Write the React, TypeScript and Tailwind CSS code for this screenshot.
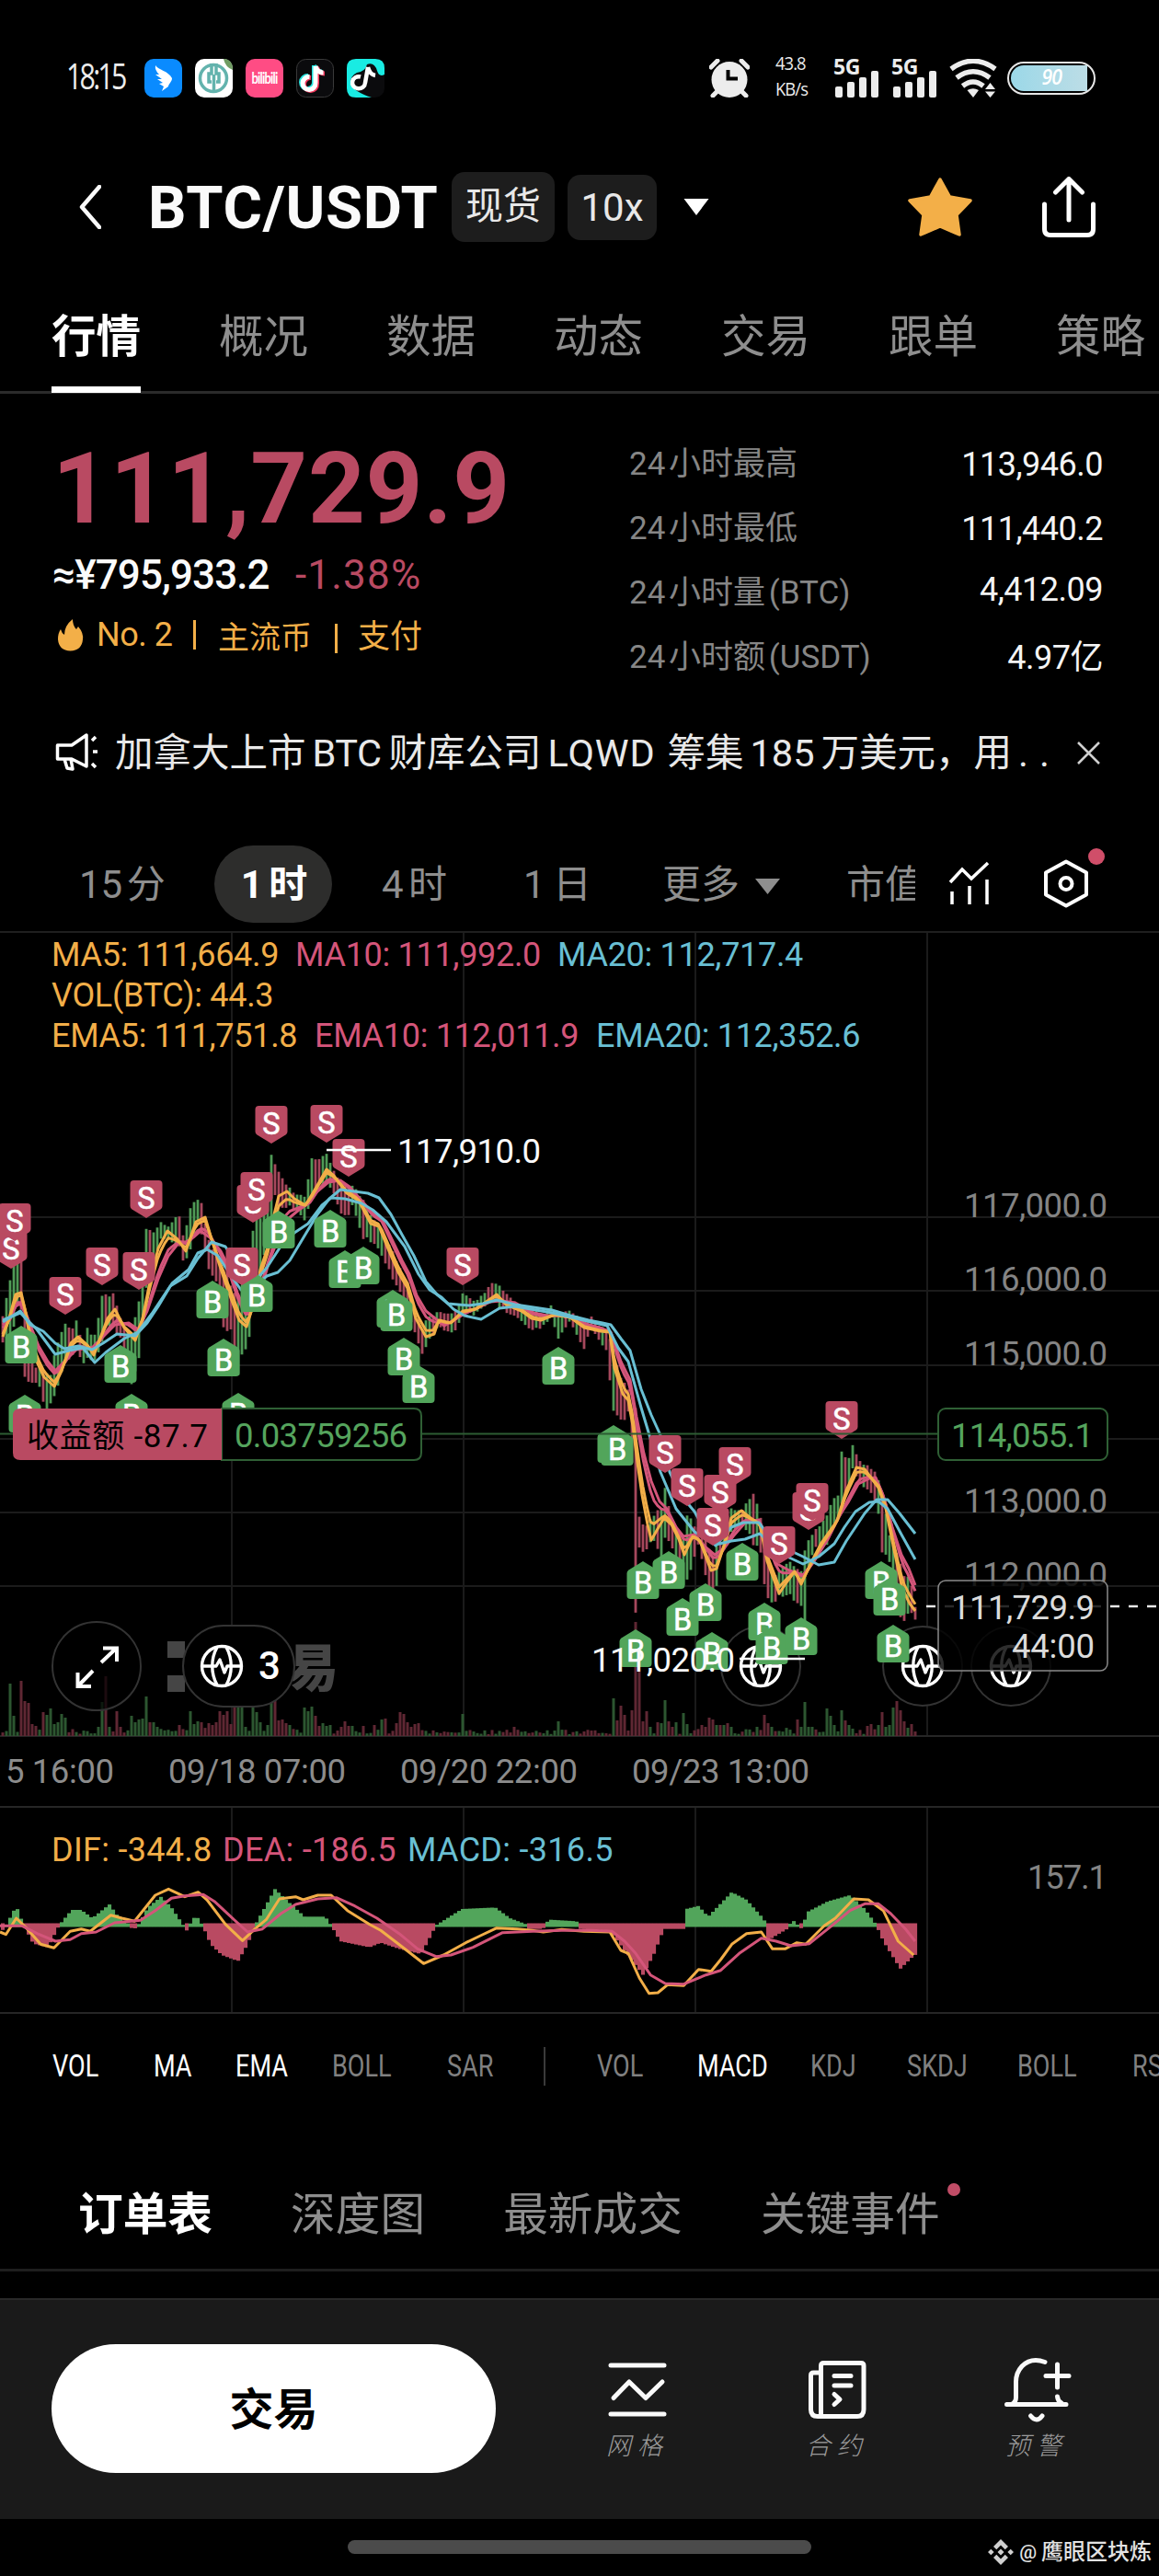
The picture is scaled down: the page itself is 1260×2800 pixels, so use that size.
/** @format */

import type { ReactNode } from "react";

/* ============================== */
/* TYPES                          */
/* ============================== */

type Pt = [number, number];
type Range = [number, number, number];

/* ============================== */
/* PAGE DATA                      */
/* ============================== */

const navTabs = ["行情", "概况", "数据", "动态", "交易", "跟单", "策略"];

const stats = [
  { label: "24 小时最高", value: "113,946.0", lift: "" },
  { label: "24 小时最低", value: "111,440.2", lift: "" },
  { label: "24 小时量 (BTC)", value: "4,412.09", lift: "pb-[8px]" },
  { label: "24 小时额 (USDT)", value: "4.97亿", lift: "" },
];

const indicators = [
  { name: "VOL", on: true, w: "w-[110px]" },
  { name: "MA", on: true, w: "w-[89px]" },
  { name: "EMA", on: true, w: "w-[105px]" },
  { name: "BOLL", on: false, w: "w-[125px]" },
  { name: "SAR", on: false, w: "w-[105px]" },
];

const subIndicators = [
  { name: "VOL", on: false, w: "w-[109px]" },
  { name: "MACD", on: true, w: "w-[123px]" },
  { name: "KDJ", on: false, w: "w-[105px]" },
  { name: "SKDJ", on: false, w: "w-[120px]" },
  { name: "BOLL", on: false, w: "w-[125px]" },
  { name: "RSI", on: false, w: "w-[80px]" },
];

/* ============================== */
/* CHART DATA                     */
/* ============================== */

// x, high, low
const candleRange: Range[] = [
  [0, 1443, 1467], [10, 1390, 1453], [15, 1373, 1443], [22, 1355, 1413], [27, 1420, 1507], [32, 1430, 1513],
  [37, 1487, 1503], [43, 1483, 1510], [48, 1487, 1533], [55, 1490, 1530], [60, 1460, 1515], [71, 1437, 1487],
  [79, 1442, 1473], [83, 1435, 1460], [90, 1460, 1487], [95, 1442, 1480], [103, 1450, 1482], [111, 1406, 1460],
  [115, 1402, 1447], [123, 1405, 1443], [133, 1437, 1460], [143, 1447, 1507], [151, 1410, 1482], [159, 1333, 1400],
  [167, 1337, 1373], [175, 1328, 1347], [183, 1333, 1350], [195, 1317, 1360], [200, 1343, 1377], [207, 1307, 1360],
  [215, 1302, 1327], [219, 1307, 1347], [227, 1347, 1382], [237, 1363, 1400], [243, 1377, 1447], [251, 1393, 1450],
  [259, 1407, 1505], [263, 1413, 1477], [271, 1387, 1457], [275, 1337, 1427], [279, 1320, 1393], [283, 1320, 1390],
  [295, 1252, 1337], [299, 1262, 1303], [303, 1272, 1317], [315, 1290, 1313], [323, 1297, 1320], [331, 1300, 1327],
  [339, 1255, 1303], [347, 1258, 1287], [355, 1250, 1290], [363, 1270, 1300], [371, 1283, 1320], [379, 1290, 1323],
  [383, 1285, 1313], [395, 1303, 1347], [403, 1320, 1352], [415, 1333, 1365], [427, 1360, 1393], [435, 1377, 1407],
  [443, 1393, 1430], [452, 1427, 1453], [459, 1440, 1475], [467, 1430, 1457], [477, 1423, 1443], [487, 1427, 1450],
  [497, 1423, 1447], [503, 1405, 1427], [515, 1413, 1430], [525, 1407, 1423], [535, 1392, 1413], [543, 1397, 1423],
  [555, 1410, 1430], [567, 1423, 1437], [579, 1423, 1448], [590, 1427, 1443], [599, 1418, 1433], [607, 1427, 1456],
  [620, 1423, 1437], [635, 1437, 1467], [643, 1430, 1443], [651, 1440, 1458], [659, 1443, 1470], [667, 1457, 1540],
  [675, 1493, 1550], [683, 1510, 1537], [687, 1527, 1597], [691, 1530, 1763], [695, 1643, 1687], [700, 1660, 1687],
  [711, 1643, 1677], [719, 1635, 1697], [723, 1608, 1677], [730, 1653, 1680], [743, 1667, 1728], [747, 1643, 1727],
  [759, 1660, 1680], [767, 1670, 1713], [775, 1680, 1765], [783, 1667, 1693], [795, 1637, 1667], [806, 1640, 1657],
  [819, 1622, 1680], [826, 1643, 1683], [832, 1667, 1733], [840, 1707, 1747], [847, 1707, 1737], [859, 1693, 1738],
  [871, 1707, 1748], [875, 1683, 1800], [879, 1670, 1707], [885, 1663, 1683], [899, 1647, 1680], [904, 1628, 1660],
  [911, 1625, 1653], [915, 1572, 1640], [922, 1583, 1620], [927, 1568, 1597], [934, 1587, 1613], [947, 1593, 1623],
  [955, 1603, 1647], [959, 1623, 1688], [967, 1667, 1700], [975, 1680, 1757], [983, 1713, 1768], [989, 1707, 1757],
  [995, 1745, 1762],
];

const ma5: Pt[] = [
  [3, 1453], [10, 1433], [17, 1407], [23, 1405], [28, 1427], [33, 1457], [40, 1480], [48, 1497], [59, 1507],
  [67, 1490], [77, 1460], [85, 1453], [95, 1462], [102, 1473], [108, 1457], [117, 1433], [125, 1423], [135, 1443],
  [147, 1457], [155, 1433], [163, 1393], [172, 1357], [182, 1338], [193, 1347], [202, 1360], [213, 1328],
  [223, 1323], [230, 1347], [238, 1373], [248, 1403], [260, 1435], [268, 1442], [277, 1413], [283, 1380],
  [293, 1350], [298, 1320], [303, 1300], [312, 1295], [320, 1303], [332, 1310], [340, 1297], [355, 1271],
  [363, 1278], [377, 1297], [390, 1305], [403, 1330], [412, 1333], [423, 1360], [433, 1383], [443, 1400],
  [452, 1433], [463, 1453], [472, 1450], [477, 1435], [490, 1438], [503, 1425], [517, 1423], [540, 1407],
  [550, 1418], [567, 1425], [578, 1433], [588, 1435], [603, 1429], [620, 1432], [635, 1443], [653, 1447],
  [663, 1448], [668, 1487], [677, 1515], [683, 1522], [688, 1550], [693, 1590], [698, 1625], [704, 1657],
  [708, 1674], [716, 1660], [722, 1650], [730, 1657], [738, 1673], [744, 1690], [753, 1670], [761, 1675],
  [773, 1707], [779, 1705], [787, 1680], [795, 1650], [806, 1642], [816, 1650], [826, 1657], [834, 1697],
  [847, 1732], [855, 1720], [864, 1708], [871, 1722], [881, 1700], [893, 1677], [910, 1653], [920, 1620],
  [931, 1595], [940, 1597], [955, 1617], [963, 1640], [971, 1680], [981, 1727], [989, 1743], [995, 1751],
];

const ma10: Pt[] = [
  [3, 1440], [10, 1435], [17, 1420], [22, 1417], [30, 1433], [42, 1463], [52, 1480], [60, 1490], [70, 1480],
  [83, 1467], [100, 1465], [115, 1450], [125, 1440], [140, 1438], [150, 1445], [160, 1425], [172, 1390],
  [183, 1365], [195, 1350], [202, 1350], [210, 1345], [218, 1338], [228, 1345], [240, 1360], [250, 1380],
  [258, 1405], [268, 1427], [277, 1420], [285, 1397], [293, 1370], [305, 1340], [313, 1325], [325, 1315],
  [337, 1307], [345, 1295], [357, 1285], [370, 1283], [380, 1290], [393, 1305], [405, 1318], [415, 1325],
  [425, 1345], [437, 1370], [445, 1385], [453, 1408], [463, 1425], [473, 1433], [483, 1441], [493, 1435],
  [505, 1428], [518, 1422], [533, 1415], [545, 1414], [560, 1416], [580, 1427], [595, 1430], [610, 1430],
  [625, 1433], [640, 1440], [655, 1444], [664, 1448], [675, 1480], [685, 1500], [692, 1540], [700, 1580],
  [708, 1610], [717, 1632], [725, 1640], [735, 1660], [743, 1670], [755, 1668], [765, 1680], [777, 1690],
  [787, 1683], [797, 1670], [810, 1655], [825, 1652], [835, 1675], [845, 1700], [858, 1707], [873, 1712],
  [885, 1697], [900, 1673], [911, 1650], [922, 1633], [933, 1613], [945, 1607], [952, 1606], [960, 1625],
  [970, 1660], [980, 1690], [988, 1705], [995, 1723],
];

const ma20: Pt[] = [
  [3, 1437], [22, 1425], [33, 1440], [47, 1447], [60, 1460], [70, 1466], [85, 1463], [100, 1467], [112, 1460],
  [127, 1450], [147, 1452], [160, 1438], [172, 1420], [187, 1395], [205, 1380], [215, 1362], [225, 1358],
  [237, 1365], [250, 1385], [262, 1402], [275, 1400], [290, 1387], [302, 1383], [315, 1370], [330, 1345],
  [345, 1320], [358, 1303], [370, 1293], [385, 1295], [400, 1297], [412, 1302], [425, 1320], [437, 1342],
  [450, 1365], [463, 1393], [475, 1407], [487, 1417], [498, 1418], [510, 1419], [525, 1417], [540, 1413],
  [560, 1418], [580, 1421], [600, 1424], [620, 1430], [640, 1435], [655, 1438], [664, 1440], [675, 1455],
  [685, 1468], [697, 1510], [708, 1538], [718, 1560], [728, 1600], [740, 1625], [755, 1643], [770, 1670],
  [778, 1680], [795, 1660], [808, 1655], [825, 1655], [840, 1675], [858, 1685], [873, 1692], [890, 1701],
  [907, 1698], [920, 1675], [940, 1645], [953, 1630], [965, 1630], [978, 1645], [995, 1667],
];

const ema20: Pt[] = [
  [3, 1435], [22, 1427], [40, 1445], [60, 1472], [75, 1468], [90, 1465], [103, 1481], [115, 1470], [135, 1455],
  [150, 1448], [165, 1428], [185, 1398], [203, 1387], [215, 1368], [230, 1350], [245, 1355], [258, 1375],
  [275, 1395], [290, 1378], [305, 1355], [320, 1340], [335, 1330], [350, 1310], [360, 1302], [375, 1303],
  [393, 1308], [405, 1315], [420, 1328], [440, 1355], [455, 1385], [467, 1402], [480, 1410], [493, 1423],
  [505, 1430], [523, 1434], [543, 1422], [560, 1420], [600, 1427], [660, 1441], [672, 1465], [683, 1480],
  [697, 1530], [706, 1560], [718, 1600], [735, 1640], [755, 1665], [778, 1679], [795, 1675], [810, 1673],
  [826, 1667], [840, 1680], [858, 1693], [873, 1700], [890, 1692], [907, 1678], [918, 1660], [930, 1643],
  [945, 1633], [955, 1632], [965, 1640], [980, 1668], [995, 1695],
];

const volumeSpikes: Record<number, number> = {
  11: 57, 15: 22, 23: 60, 27: 38, 31: 36, 35: 13, 39: 11, 47: 26, 51: 23, 55: 30, 59: 13, 63: 15, 67: 24, 71: 20,
  107: 10, 111: 37, 115: 65, 119: 10, 127: 27, 131: 10, 143: 22, 147: 15, 151: 18, 155: 19, 159: 43, 163: 15,
  167: 15, 171: 10, 195: 12, 207: 27, 211: 13, 215: 16, 219: 15, 227: 14, 231: 12, 235: 15, 239: 27, 243: 23,
  247: 27, 251: 13, 255: 33, 259: 33, 263: 32, 267: 10, 275: 32, 279: 26, 283: 15, 291: 12, 295: 38, 299: 39,
  303: 17, 307: 18, 311: 14, 315: 12, 331: 31, 335: 27, 339: 32, 343: 22, 347: 11, 351: 14, 355: 11, 359: 12,
  371: 10, 375: 16, 379: 11, 383: 11, 395: 11, 407: 12, 415: 18, 419: 19, 431: 14, 435: 26, 439: 24, 443: 15,
  447: 10, 451: 13, 455: 14, 503: 24, 559: 10, 607: 16, 667: 41, 671: 17, 675: 33, 679: 23, 683: 6, 687: 28,
  691: 124, 695: 70, 699: 16, 703: 27, 707: 10, 715: 15, 719: 14, 723: 39, 727: 16, 731: 10, 735: 15, 743: 25,
  747: 13, 763: 12, 767: 10, 771: 20, 775: 18, 779: 12, 783: 12, 787: 12, 791: 14, 795: 10, 823: 10, 831: 23,
  835: 14, 839: 10, 867: 18, 871: 10, 875: 37, 879: 10, 883: 10, 899: 30, 903: 22, 907: 12, 915: 28, 919: 17,
  923: 12, 943: 11, 947: 13, 955: 12, 959: 26, 963: 10, 967: 12, 971: 31, 975: 38, 979: 28, 983: 16, 987: 9,
  991: 13, 995: 5,
};

const buys: Pt[] = [
  [27, 1516], [23, 1441], [131, 1462], [143, 1515], [231, 1392], [243, 1455], [259, 1514], [279, 1385],
  [303, 1316], [359, 1315], [375, 1359], [395, 1355], [427, 1402], [431, 1406], [439, 1454], [455, 1484],
  [607, 1464], [667, 1549], [671, 1552], [691, 1771], [699, 1697], [727, 1686], [742, 1737], [767, 1721],
  [774, 1774], [807, 1677], [831, 1742], [839, 1768], [871, 1758], [958, 1697], [967, 1715], [971, 1766],
];

const sells: Pt[] = [
  [12, 1338], [16, 1308], [71, 1388], [111, 1356], [159, 1283], [151, 1361], [263, 1356], [275, 1288],
  [279, 1274], [295, 1202], [355, 1201], [379, 1238], [503, 1356], [723, 1560], [747, 1596], [799, 1573],
  [783, 1603], [775, 1639], [847, 1659], [879, 1622], [883, 1612], [915, 1523],
];

// MACD series, kept in the panel's own units
const histogram: Pt[] = [
  [0, 455], [8, 430], [22, 365], [32, 428], [45, 488], [65, 500], [80, 428], [97, 378], [110, 378], [125, 405],
  [148, 360], [160, 400], [175, 425], [180, 445], [187, 428], [200, 370], [218, 335], [232, 370], [248, 428],
  [252, 448], [256, 428], [265, 395], [274, 428], [285, 490], [300, 525], [322, 545], [335, 490], [345, 428],
  [372, 310], [385, 340], [412, 400], [440, 400], [448, 428], [460, 480], [500, 500], [515, 485], [540, 505],
  [570, 522], [590, 428], [625, 375], [670, 370], [690, 405], [712, 425], [715, 440], [735, 440], [738, 420],
  [745, 410], [780, 415], [785, 440], [825, 445], [845, 510], [870, 590], [885, 520], [898, 440], [925, 440],
  [928, 375], [945, 365], [958, 400], [990, 320], [1010, 345], [1034, 410], [1037, 480], [1065, 440],
  [1072, 410], [1085, 440], [1092, 385], [1120, 350], [1150, 330], [1170, 375], [1185, 425], [1195, 480],
  [1218, 570], [1235, 530], [1241, 520],
];

const dif: Pt[] = [
  [0, 450], [8, 458], [22, 405], [35, 435], [55, 490], [73, 502], [95, 448], [110, 440], [122, 448], [150, 395],
  [165, 405], [182, 415], [210, 330], [228, 310], [250, 335], [268, 320], [280, 345], [305, 425], [328, 478],
  [345, 440], [360, 410], [378, 342], [400, 335], [410, 345], [430, 330], [448, 330], [470, 380], [500, 425],
  [515, 445], [545, 500], [573, 553], [600, 525], [630, 485], [650, 462], [672, 437], [700, 440], [720, 445],
  [735, 450], [760, 442], [790, 448], [825, 450], [840, 510], [850, 520], [865, 600], [878, 650], [890, 648],
  [903, 622], [925, 625], [945, 572], [962, 578], [975, 540], [990, 490], [1010, 455], [1030, 450], [1045, 505],
  [1062, 505], [1078, 485], [1090, 490], [1115, 430], [1130, 405], [1155, 342], [1175, 345], [1195, 380],
  [1215, 480], [1236, 525],
];

const dea: Pt[] = [
  [0, 430], [30, 430], [50, 455], [75, 480], [95, 475], [110, 455], [130, 450], [155, 420], [190, 412],
  [210, 380], [232, 340], [250, 332], [275, 328], [290, 350], [310, 395], [335, 450], [355, 440], [380, 390],
  [400, 360], [430, 342], [455, 338], [480, 365], [510, 405], [540, 455], [565, 505], [590, 530], [610, 525],
  [640, 500], [680, 452], [720, 448], [760, 445], [800, 445], [828, 448], [845, 480], [860, 520], [880, 590],
  [900, 618], [925, 620], [955, 590], [975, 575], [1000, 520], [1030, 470], [1050, 480], [1070, 495],
  [1095, 488], [1125, 430], [1150, 380], [1170, 358], [1188, 358], [1205, 390], [1225, 440], [1238, 480],
];

/* ============================== */
/* CHART HELPERS                  */
/* ============================== */

const UP = "#52a55b";
const DOWN = "#b94a62";
const ORANGE = "#f2ae48";
const PINK = "#d4557a";
const BLUE = "#69bfd3";

const noise = (n: number) => {
  const v = Math.sin(n * 127.1 + 11.7) * 43758.5453;
  return v - Math.floor(v);
};

const at = (pts: number[][], x: number, k = 1) => {
  let i = 1;
  while (i < pts.length - 1 && pts[i][0] < x) i++;
  const a = pts[i - 1];
  const b = pts[i];
  const t = Math.min(1, Math.max(0, (x - a[0]) / (b[0] - a[0])));
  return a[k] + (b[k] - a[k]) * t;
};

const line = (pts: Pt[]) => "M" + pts.map((p) => `${p[0].toFixed(1)} ${p[1].toFixed(1)}`).join("L");

const xs = Array.from({ length: 249 }, (_, i) => 3 + i * 4);

const candles = xs.map((x, i) => {
  const top = at(candleRange, x, 1);
  const bottom = at(candleRange, x, 2);
  const h = bottom - top;
  const y1 = top + h * noise(i) * 0.14;
  const y2 = bottom - h * noise(i + 500) * 0.14;
  const slope = at(candleRange, x + 4, 1) - at(candleRange, x - 4, 1);
  const up = noise(i + 900) > 0.5 + Math.max(-0.35, Math.min(0.35, slope / 40));
  return { x, y1, y2, up };
});

const blend = (a: Pt[], b: Pt[], k: number): Pt[] => xs.map((x) => [x, at(a, x) * (1 - k) + at(b, x - 2) * k]);

const ema5 = blend(ma5, ma10, 0.22);
const ema10 = blend(ma10, ma5, 0.25);

const mx = (x: number) => x * 0.8036;
const my = (y: number) => 1950 + y / 3;
const macdLine = (pts: Pt[]) => line(pts.map(([x, y]): Pt => [mx(x), my(y)]));

/* ============================== */
/* ICONS                          */
/* ============================== */

function Marker({ x, y, side }: { x: number; y: number; side: "B" | "S" }) {
  const buy = side === "B";
  return (
    <g transform={`translate(${x - 17.5} ${y})`}>
      <path
        d={
          buy
            ? "M17.5 0L33 9.500Q35 11 35 13V37Q35 41 31 41H4Q0 41 0 37V13Q0 11 2 9.500Z"
            : "M17.500 41L33 31.500Q35 30 35 28V4Q35 0 31 0H4Q0 0 0 4V28Q0 30 2 31.500Z"
        }
        fill={buy ? UP : DOWN}
      />
      <text
        x="17.5"
        y={buy ? 34.5 : 30.5}
        fontSize="32.5"
        fontWeight="400"
        textAnchor="middle"
        fill="#fff"
        stroke="#fff"
        strokeWidth="0.6"
      >
        {side}
      </text>
    </g>
  );
}

function Globe({ x, y }: { x: number; y: number }) {
  return (
    <g transform={`translate(${x} ${y})`} fill="none" stroke="#fff" strokeWidth="3.4" strokeLinejoin="round">
      <circle r="21.500" />
      <path d="M-5 -20.500C-12 -8 -12 8 -5 20.500M5 -20.500C12 -8 12 8 5 20.500M-21.500 0H-6L-2 -7L3 7L6 0H21.500" />
    </g>
  );
}

function Signal() {
  return (
    <div className="relative h-[42px] w-[50px]">
      <span className="absolute -top-[3px] left-0 font-['Open_Sans'] text-[23px] leading-[22px] font-bold tracking-[-0.5px]">
        5G
      </span>
      <svg className="absolute inset-0" width="50" height="42" fill="#ececec">
        <rect x="2" y="30" width="8" height="12" rx="2" />
        <rect x="15" y="25" width="8" height="17" rx="2" />
        <rect x="28" y="20" width="8" height="22" rx="2" />
        <rect x="41" y="13" width="8" height="29" rx="2" />
      </svg>
    </div>
  );
}

const NOTE = "M21 8V26A7 7 0 1 1 14.500 19.500M21 8Q23 15 29.500 15";

/* ============================== */
/* SECTIONS                       */
/* ============================== */

function StatusBar() {
  return (
    <header className="flex h-[170px] items-center pl-[72px] pr-[69px] text-[#ececec]">
      <span className="w-[85px] pb-[6px] font-['Open_Sans'] text-[38px] leading-none tracking-[-3.5px]">
        <span className="inline-block origin-left scale-x-[0.8]">18:15</span>
      </span>

      <div className="flex gap-[14px]">
        <svg width="41" height="42" viewBox="0 0 41 42">
          <rect width="41" height="42" rx="10" fill="#0a8bff" />
          <path
            d="M12 7C15 12 26 13 30 21C30 25 26 27 26 30L19 35L21 30L16 27L20 26L14 22L19 22L12 17L16 17Q11 12 12 7Z"
            fill="#fff"
          />
        </svg>
        <svg width="41" height="42" viewBox="0 0 41 42">
          <rect width="41" height="42" rx="10" fill="#fff" />
          <path d="M31 0Q41 0 41 12Q33 9 31 0Z" fill="#6f9c62" />
          <circle cx="20" cy="21" r="14.500" fill="none" stroke="#63b3ad" strokeWidth="3.500" />
          <path d="M18 5V16H15V25H18M23 5V16H26V25H23M20.500 17V36" fill="none" stroke="#63b3ad" strokeWidth="3.500" />
        </svg>
        <div className="flex h-[42px] w-[41px] items-center justify-center rounded-[10px] bg-[#ff4c84]">
          <span className="scale-y-[1.25] font-['Lato'] text-[13px] leading-none font-bold tracking-[-0.8px] text-white">
            bilibili
          </span>
        </div>
        <svg width="41" height="42" viewBox="0 0 41 42" fill="none" strokeWidth="5">
          <rect x="0.500" y="0.500" width="40" height="41" rx="10" fill="#0b0b0d" stroke="#3a3a3a" strokeWidth="1" />
          <path d={NOTE} stroke="#25e5e0" transform="translate(-1.500 -1)" />
          <path d={NOTE} stroke="#f2375b" transform="translate(1.500 1)" />
          <path d={NOTE} stroke="#fff" />
        </svg>
        <svg width="41" height="42" viewBox="0 0 41 42" fill="none">
          <rect width="41" height="42" rx="10" fill="#0b0b0d" />
          <path d="M10 0H31Q41 0 41 10V17Q35 20 33 13Q30 3 22 6Q20 14 11 15Q4 18 4 27Q8 36 27 42H10Q0 42 0 32V10Q0 0 10 0Z" fill="#19ece3" />
          <path d="M23 9L20 26A7 6.500 0 1 1 15 19.500M23 9Q25 17 31 18" stroke="#fff" strokeWidth="4.500" />
        </svg>
      </div>

      <div className="ml-auto flex items-center">
        <svg width="44" height="42" viewBox="0 0 44 42" fill="none" stroke="#ececec">
          <circle cx="22" cy="22.500" r="19.500" fill="#ececec" stroke="none" />
          <path d="M2 9L9 2M42 9L35 2" strokeWidth="5" strokeLinecap="round" />
          <path d="M8 36L4 40M36 36L40 40" strokeWidth="5" strokeLinecap="round" />
          <path d="M20.500 12V21.500H31" stroke="#000" strokeWidth="4" />
        </svg>
        <div className="ml-[28px] flex w-[63px] flex-col gap-[6px] pb-[4px] font-['Open_Sans'] text-[20px] leading-[22px] tracking-[-1px]">
          <span className="origin-left scale-x-[0.92]">43.8</span>
          <span className="origin-left scale-x-[0.92]">KB/s</span>
        </div>
        <Signal />
        <div className="w-[13px]" />
        <Signal />
        <svg className="ml-[13px]" width="52" height="42" viewBox="0 0 52 42" fill="none" stroke="#ececec" strokeWidth="5.500">
          <path d="M2 11Q26 -6.500 50 11M8 20.500Q26 7 44 20.500M14.500 29.500Q26 20.500 37 29.500" />
          <path d="M19.500 34Q26 30.500 32 34L26 42ZM39 33H50L44.500 26ZM39 35.500H50L44.500 42Z" fill="#ececec" stroke="none" />
        </svg>
        <div className="ml-[11px] flex h-[36px] w-[96px] rounded-full border-[2px] border-[#e6e6e6] p-[2px]">
          <div className="flex w-[83px] items-center justify-center rounded-l-full rounded-r-[6px] bg-linear-to-r from-[#9bd8e8] to-[#bcdde6] pb-[5px] pl-[6px] font-['Open_Sans'] text-[24px] leading-none font-semibold tracking-[-1px] text-white italic">
            <span className="scale-x-[0.88]">90</span>
          </div>
        </div>
      </div>
    </header>
  );
}

function TitleBar() {
  return (
    <div className="flex h-[110px] items-center pl-[86px] pr-[69px]">
      <svg className="w-[24px]" height="48" viewBox="0 0 24 48" fill="none" stroke="#fafafa" strokeWidth="4.500">
        <path d="M22 2L3 24L22 46" strokeLinecap="round" strokeLinejoin="round" />
      </svg>
      <h1 className="ml-[51px] w-[330px] pt-[3px] text-[65px] leading-none font-bold tracking-[0.7px] whitespace-nowrap text-[#fafafa]">
        BTC/USDT
      </h1>
      <span className="flex h-[76px] w-[112px] items-center justify-center rounded-[14px] bg-[#1d1d1d] text-[41px] text-[#e8e8e8]">
        现货
      </span>
      <span className="ml-[14px] flex h-[71px] w-[97px] items-center justify-center rounded-[14px] bg-[#1d1d1d] text-[42px] text-[#e8e8e8]">
        10x
      </span>
      <svg className="ml-[28px]" width="30" height="20" viewBox="0 0 30 20">
        <path d="M1.500 1H28.500L15 19Z" fill="#fff" />
      </svg>
      <svg className="ml-auto" width="70" height="64" viewBox="0 0 70 64">
        <path
          d="M35 2L45.500 21L68 25L53 40.500L56 62L35 53L14 62L17 40.500L2 25L24.500 21Z"
          fill="#f3af48"
          stroke="#f3af48"
          strokeWidth="3.500"
          strokeLinejoin="round"
        />
      </svg>
      <svg className="ml-[76px]" width="58" height="66" viewBox="0 0 58 66" fill="none" stroke="#fff" strokeWidth="5">
        <path d="M29 47V3M14.500 17L29 2.500L43.500 17M2.500 30V57Q2.500 63.500 9 63.500H49Q55.500 63.500 55.500 57V30" strokeLinecap="round" strokeLinejoin="round" />
      </svg>
    </div>
  );
}

function NavTabs() {
  return (
    <nav className="flex h-[148px] gap-[85px] overflow-x-clip border-b-[3px] border-[#2b2b2b] pl-[56px] pt-[57px]">
      {navTabs.map((tab, i) => (
        <div key={tab} className="w-[97px] shrink-0">
          <p className={`text-[48.5px] leading-[60px] whitespace-nowrap ${i === 0 ? "font-bold text-white" : "text-[#8e8e8e]"}`}>
            {tab}
          </p>
          {i === 0 && <div className="relative mt-[23px] h-[7px] bg-white" />}
        </div>
      ))}
    </nav>
  );
}

function PriceSummary() {
  return (
    <section className="flex h-[342px] pl-[57px] pr-[61px]">
      <div className="w-[627px] pt-[48px]">
        <p className="text-[108px] leading-[110px] font-bold tracking-[0.7px] text-[#b94a62]">111,729.9</p>
        <div className="mt-[15px] flex text-[44px] leading-[48px]">
          <span className="w-[264px] font-medium tracking-[-0.9px] text-[#fafafa]">≈¥795,933.2</span>
          <span className="tracking-[1.2px] text-[#b94a62]">-1.38%</span>
        </div>
        <div className="mt-[17px] flex h-[48px] items-center text-[36px] leading-[48px] text-[#f3af48]">
          <svg className="ml-[5px]" width="29" height="35" viewBox="0 0 29 35" fill="#f3af48">
            <path d="M17 0Q17 7 21 11L23 8Q29 15 28 22Q27 34 14.500 34.500Q2 34 1 22Q1 15 4 11Q5 15 8 17Q8 7 17 0Z" />
          </svg>
          <span className="ml-[14px] w-[105px] tracking-[-0.5px]">No. 2</span>
          <span className="h-[32px] w-[3px] bg-[#f3af48]" />
          <span className="ml-[24px] w-[127px] pt-[6px] text-[34px]">主流币</span>
          <span className="mt-[7px] h-[32px] w-[3px] bg-[#f3af48]" />
          <span className="ml-[22px] pt-[6px] text-[35px]">支付</span>
        </div>
      </div>

      <div className="flex-1 pt-[42px]">
        {stats.map((s) => (
          <div key={s.label} className="flex h-[70px] items-center justify-between text-[35px]">
            <span className="[word-spacing:-5px] text-[#868686]">{s.label}</span>
            <span className={`text-[36px] tracking-[-0.5px] text-[#f4f4f4] ${s.lift}`}>{s.value}</span>
          </div>
        ))}
      </div>
    </section>
  );
}

function NewsTicker() {
  return (
    <div className="flex h-[96px] items-center pl-[60px] pr-[64px] text-[41.5px] whitespace-nowrap text-[#e8e8e8]">
      <svg width="48" height="42" viewBox="0 0 48 42" fill="none" stroke="#fff" strokeWidth="3.500" strokeLinejoin="round">
        <path d="M2.500 13H18L34 2V36L18 28H2.500ZM10 28L13 38L19 39L17 28M40 8L44 4M41 20H46M40 33L44 37" />
      </svg>
      <p className="ml-[17px] flex gap-[7px] pt-[3px]">
        <span>加拿大上市</span>
        <span className="w-[76px] tracking-[-0.5px]">BTC</span>
        <span>财库公司</span>
        <span className="w-[123px] tracking-[1px]">LQWD</span>
        <span>筹集</span>
        <span className="w-[70px]">185</span>
        <span>万美元，用</span>
        <span className="tracking-[12px]">..</span>
      </p>
      <svg className="ml-auto" width="25" height="25" viewBox="0 0 25 25" stroke="#d0d0d0" strokeWidth="2.500">
        <path d="M1 1L24 24M24 1L1 24" />
      </svg>
    </div>
  );
}

function IntervalTabs() {
  return (
    <div className="flex h-[148px] border-b-[2px] border-[#1f1f1f] pt-[53px] text-[42px] text-[#8e8e8e]">
      <div className="flex h-[84px] w-[995px] shrink-0 items-center overflow-hidden whitespace-nowrap">
        <span className="ml-[86px] w-[147px] shrink-0 [word-spacing:-6px]">15 分</span>
        <span className="flex h-[84px] w-[128px] shrink-0 items-center justify-center rounded-full bg-[#2d2d2c] pl-[2px] font-bold text-white [word-spacing:-4px]">
          1 时
        </span>
        <span className="ml-[54px] w-[154px] shrink-0 [word-spacing:-5px]">4 时</span>
        <span className="w-[151px] shrink-0 [word-spacing:-2px]">1 日</span>
        <span className="shrink-0">更多</span>
        <svg className="ml-[16px] mt-[5px] shrink-0" width="29" height="19" viewBox="0 0 29 19" fill="#8e8e8e">
          <path d="M1 1H28L14.500 18Z" />
        </svg>
        <span className="ml-[71px] shrink-0">市值</span>
      </div>
      <svg className="ml-[36px] mt-[17px]" width="48" height="50" viewBox="0 0 48 50" fill="none" stroke="#fff" strokeWidth="3.500">
        <path d="M2 23L15 9L25 19L43 2M4 33V47M23 27V47M42 20V47" />
      </svg>
      <div className="relative ml-[56px] mt-[15px]">
        <svg width="48" height="53" viewBox="0 0 48 53" fill="none" stroke="#fff" strokeWidth="4" strokeLinejoin="round">
          <path d="M24 2.500L46 14.500V38.500L24 50.500L2 38.500V14.500Z" />
          <circle cx="24" cy="26.500" r="6.500" />
        </svg>
        <span className="absolute -right-[18px] -top-[12px] h-[18px] w-[18px] rounded-full bg-[#d04e69]" />
      </div>
    </div>
  );
}

function Legend({ children, color, w }: { children: ReactNode; color: string; w: string }) {
  return <span className={`${color} ${w} shrink-0`}>{children}</span>;
}

function Chart() {
  const prices: [string, number][] = [
    ["117,000.0", 1323],
    ["116,000.0", 1403],
    ["115,000.0", 1484],
    ["113,000.0", 1644],
    ["112,000.0", 1724],
  ];

  return (
    <section className="relative h-[1176px] overflow-hidden">
      <svg width="1260" height="1176" viewBox="0 1014 1260 1176" fontFamily="Roboto, 'Noto Sans CJK SC', sans-serif" fontSize="36.500">
        {/* GRID */}
        <g stroke="#1b1b1b" strokeWidth="2">
          {[252, 504, 756, 1008].map((x) => (
            <path key={x} d={`M${x} 1014V1887M${x} 1964V2188`} />
          ))}
          {[1323, 1403, 1484, 1564, 1644, 1724].map((y) => (
            <path key={y} d={`M0 ${y}H1260`} />
          ))}
          <path d="M0 1887H1260M0 1964H1260M0 2188H1260" stroke="#262626" />
        </g>

        {/* WATERMARK */}
        <g fill="#454545">
          <path d="M182 1784H201V1802H182ZM182 1821H201V1839H182ZM201 1802H220V1821H201Z" />
          <text x="312" y="1833" fontSize="56" fontWeight="900">
            易
          </text>
        </g>

        {/* VOLUME */}
        {candles.map((c, i) => {
          const quiet = c.x > 460 && c.x < 666 ? 5 : 7;
          const h = volumeSpikes[c.x] ?? 2 + noise(i + 40) * quiet;
          return <rect key={c.x} x={c.x - 1.5} y={1887 - h} width="3" height={h} fill={c.up ? "#2c5630" : "#5f2733"} />;
        })}

        {/* CANDLES */}
        {candles.map((c) => (
          <rect key={c.x} x={c.x - 1.4} y={c.y1} width="2.800" height={c.y2 - c.y1} fill={c.up ? "#4f9a56" : "#a6485c"} />
        ))}

        {/* MOVING AVERAGES */}
        <g fill="none" strokeWidth="3" strokeLinejoin="round">
          <path d={line(ma10)} stroke={PINK} />
          <path d={line(ema10)} stroke={PINK} />
          <path d={line(ma5)} stroke={ORANGE} />
          <path d={line(ema5)} stroke={ORANGE} />
          <path d={line(ma20)} stroke={BLUE} />
          <path d={line(ema20)} stroke={BLUE} />
        </g>

        {/* EVENTS */}
        <g fill="#000" stroke="#333" strokeWidth="2">
          <circle cx="827" cy="1811" r="43" />
          <circle cx="1003" cy="1811" r="43" />
          <circle cx="1099" cy="1811" r="43" />
          <circle cx="105" cy="1811" r="48" fillOpacity="0.7" />
          <rect x="199" y="1767" width="121" height="88" rx="44" />
        </g>
        <Globe x={827} y={1811} />
        <Globe x={1003} y={1811} />
        <Globe x={1099} y={1811} />
        <Globe x={241} y={1811} />
        <text x="281" y="1825" fontSize="42" fontWeight="500" fill="#fff">
          3
        </text>
        <path
          d="M110 1807L127 1791M112 1791.500H127V1806M101 1816L84.500 1833M84.500 1818V1833H99"
          fill="none"
          stroke="#fff"
          strokeWidth="4"
        />

        {/* TRADES */}
        {buys.map(([x, y]) => (
          <Marker key={`b${x}`} x={x} y={y} side="B" />
        ))}
        {sells.map(([x, y]) => (
          <Marker key={`s${x}`} x={x} y={y} side="S" />
        ))}

        {/* HIGH / LOW */}
        <path d="M355 1250H425M804 1803H875" stroke="#fff" strokeWidth="2.500" />
        <g fill="#fafafa">
          <text x="432" y="1264" textLength="156">117,910.0</text>
          <text x="643" y="1817" textLength="156">111,020.0</text>
        </g>

        {/* PRICE AXIS */}
        <g fill="#848484">
          {prices.map(([label, y]) => (
            <text key={label} x="1048" y={y} textLength="156">
              {label}
            </text>
          ))}
          <text x="1117" y="2053" textLength="87">157.1</text>
        </g>

        {/* POSITION */}
        <path d="M0 1558.500H1020" stroke="#2d5c33" strokeWidth="2" />
        <path d="M241 1531H450Q458 1531 458 1539V1579Q458 1587 450 1587H241Z" fill="#000" stroke="#2f6035" strokeWidth="2" />
        <path d="M22 1531H241V1587H22Q14 1587 14 1579V1539Q14 1531 22 1531Z" fill={DOWN} />
        <text x="29" y="1573" fontSize="35" textLength="197">收益额 -87.7</text>
        <text x="255" y="1573" textLength="188" fill="#55a45d">0.03759256</text>
        <rect x="1020" y="1531" width="184" height="56" rx="8" fill="#000" stroke="#2f6035" strokeWidth="2" />
        <text x="1034" y="1573" textLength="155" fill="#55a45d">114,055.1</text>

        {/* LAST PRICE */}
        <path d="M1007 1746H1260" stroke="#e8e8e8" strokeWidth="2.500" strokeDasharray="10 10" />
        <rect x="1020" y="1718" width="184" height="98" rx="8" fill="#000" fillOpacity="0.82" stroke="#8a8a8a" strokeWidth="1.500" />
        <g fill="#dcdcdc">
          <text x="1034" y="1760" textLength="156">111,729.9</text>
          <text x="1100" y="1802" textLength="90">44:00</text>
        </g>

        {/* TIME AXIS */}
        <g fill="#8c8c8c">
          <text x="6" y="1938" textLength="118">5 16:00</text>
          <text x="183" y="1938" textLength="193">09/18 07:00</text>
          <text x="435" y="1938" textLength="193">09/20 22:00</text>
          <text x="687" y="1938" textLength="193">09/23 13:00</text>
        </g>

        {/* MACD */}
        {xs.map((x) => {
          const y = my(at(histogram, x / 0.8036));
          const up = y < 2093;
          return <rect key={x} x={x - 2} y={up ? y : 2090.5} width="4.100" height={up ? 2094.5 - y : y - 2090.5} fill={up ? UP : DOWN} />;
        })}
        <g fill="none" strokeWidth="3" strokeLinejoin="round">
          <path d={macdLine(dif)} stroke={ORANGE} />
          <path d={macdLine(dea)} stroke={PINK} />
        </g>
      </svg>

      {/* LEGENDS */}
      <div className="absolute left-[56px] top-[2px] text-[36px] leading-[44px] tracking-[-0.3px] whitespace-nowrap">
        <div className="flex">
          <Legend color="text-[#f2ae48]" w="w-[265px]">MA5: 111,664.9</Legend>
          <Legend color="text-[#d4557a]" w="w-[285px]">MA10: 111,992.0</Legend>
          <Legend color="text-[#69bfd3]" w="w-[285px]">MA20: 112,717.4</Legend>
        </div>
        <div className="flex">
          <Legend color="text-[#f2ae48]" w="w-[265px]">VOL(BTC): 44.3</Legend>
        </div>
        <div className="flex">
          <Legend color="text-[#f2ae48]" w="w-[286px]">EMA5: 111,751.8</Legend>
          <Legend color="text-[#d4557a]" w="w-[306px]">EMA10: 112,011.9</Legend>
          <Legend color="text-[#69bfd3]" w="w-[306px]">EMA20: 112,352.6</Legend>
        </div>
      </div>
      <div className="absolute left-[56px] top-[975px] flex text-[36px] leading-[44px] tracking-[0.3px] whitespace-nowrap">
        <Legend color="text-[#f2ae48]" w="w-[186px]">DIF: -344.8</Legend>
        <Legend color="text-[#d4557a]" w="w-[201px]">DEA: -186.5</Legend>
        <Legend color="text-[#69bfd3]" w="w-[230px]">MACD: -316.5</Legend>
      </div>
    </section>
  );
}

function IndicatorTabs() {
  const item = (t: { name: string; on: boolean; w: string }) => (
    <span key={t.name} className={`${t.w} shrink-0 ${t.on ? "text-white" : "text-[#808080]"}`}>
      <span className="inline-block origin-left scale-x-[0.82]">{t.name}</span>
    </span>
  );

  return (
    <div className="flex h-[112px] items-center overflow-hidden pl-[57px] text-[33px]">
      {indicators.map(item)}
      <span className="mr-[56px] h-[42px] w-[2px] shrink-0 bg-[#3a3a3a]" />
      {subIndicators.map(item)}
    </div>
  );
}

function BookTabs() {
  return (
    <div className="flex h-[167px] gap-[85px] border-b-[3px] border-[#1e1e1e] pl-[85px] pt-[76px] text-[48.7px] leading-[60px] text-[#8e8e8e]">
      <span className="font-bold text-white">订单表</span>
      <span>深度图</span>
      <span>最新成交</span>
      <span className="relative">
        关键事件
        <span className="absolute -right-[22px] -top-[5px] h-[14px] w-[14px] rounded-full bg-[#c04c66]" />
      </span>
    </div>
  );
}

function ActionBar() {
  const label = "mt-[8px] text-[27px] leading-[32px] font-light tracking-[7px] text-[#9a9a9a] italic";

  return (
    <footer className="flex h-[240px] border-t-2 border-[#292929] bg-[#1a1a1a] pl-[56px] pt-[48px]">
      <button className="h-[140px] w-[483px] rounded-full bg-white pt-[4px] text-[48px] font-bold text-black">交易</button>
      <div className="ml-[116px] flex text-center">
        <div className="w-[76px]">
          <svg className="mt-[11px]" width="76" height="76" viewBox="655 2560 76 76" fill="none" stroke="#fafafa" strokeWidth="5" strokeLinecap="round" strokeLinejoin="round">
            <path d="M664 2572H722M664 2625H722M667 2607.500L684 2590L702 2607.500L720 2590" />
          </svg>
          <p className={label}>网格</p>
        </div>
        <div className="ml-[141px] w-[76px]">
          <svg className="mt-[11px]" width="76" height="76" viewBox="872 2560 76 76" fill="none" stroke="#fafafa" strokeWidth="5" strokeLinecap="round" strokeLinejoin="round">
            <path d="M892.500 2627.500V2572.500Q892.500 2569.500 895.500 2569.500H936Q939 2569.500 939 2572.500V2620Q939 2627.500 932 2627.500H889Q881.500 2627.500 881.500 2620V2583Q881.500 2580 884.500 2580H892.500" />
            <path d="M907 2583.500H925M907 2594H925M907 2603.500L913 2609L907 2614.500" />
          </svg>
          <p className={label}>合约</p>
        </div>
        <div className="ml-[141px] w-[76px]">
          <svg className="mt-[11px]" width="76" height="76" viewBox="1089 2560 76 76" fill="none" stroke="#fafafa" strokeWidth="5" strokeLinecap="round" strokeLinejoin="round">
            <path d="M1136 2568.500Q1121 2563 1111 2573Q1104.500 2580 1104.500 2590V2607Q1104.500 2612 1100 2614.500M1094.500 2614.500H1159M1149.500 2606Q1150 2611 1154 2613" />
            <path d="M1137 2583.500H1162M1149.500 2571V2596M1120.500 2627Q1127 2635 1133 2627" />
          </svg>
          <p className={label}>预警</p>
        </div>
      </div>
    </footer>
  );
}

function HomeBar() {
  return (
    <div className="relative flex h-[62px] justify-center pt-[23px]">
      <div className="h-[15px] w-[504px] rounded-full bg-[#4b4b4b]" />
      <div className="absolute right-[8px] top-[20px] flex items-center text-[24px] leading-[32px] font-medium text-[#e2e2e2]">
        <svg className="mr-[6px]" width="28" height="28" viewBox="0 0 28 28" fill="#cfcfcf">
          <path d="M14 0L22 8L18.700 11.300L14 6.600L9.300 11.300L6 8ZM14 28L22 20L18.700 16.700L14 21.400L9.300 16.700L6 20ZM14 10.500L17.500 14L14 17.500L10.500 14ZM3.300 10.700L6.600 14L3.300 17.300L0 14ZM24.700 10.700L28 14L24.700 17.300L21.400 14Z" />
        </svg>
        <span className="mr-[5px] text-[21px]">@</span>
        鹰眼区块炼
      </div>
    </div>
  );
}

/* ============================== */
/* PAGE                           */
/* ============================== */

export default function App() {
  return (
    <main className="h-[2800px] w-[1260px] overflow-hidden bg-black font-[Roboto,'Noto_Sans_CJK_SC',sans-serif] text-white">
      <StatusBar />
      <TitleBar />
      <NavTabs />
      <PriceSummary />
      <NewsTicker />
      <IntervalTabs />
      <Chart />
      <IndicatorTabs />
      <BookTabs />
      <div className="h-[29px]" />
      <ActionBar />
      <HomeBar />
    </main>
  );
}
